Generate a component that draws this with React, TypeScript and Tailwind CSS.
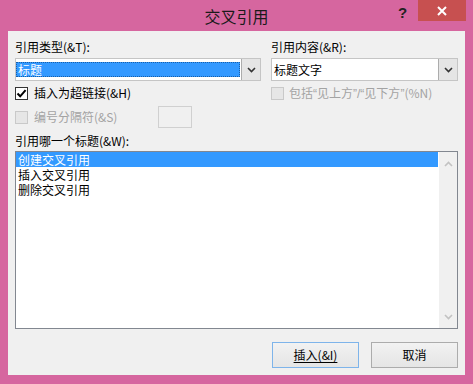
import React from "react";

function Chevron({ up = false, color = "#333", w = 9 }: { up?: boolean; color?: string; w?: number }) {
  return (
    <svg width={w} height={6} viewBox="0 0 9 6">
      {up ? (
        <path d="M1 5L4.5 1.5L8 5" fill="none" stroke={color} strokeWidth="1.6" />
      ) : (
        <path d="M1 1L4.5 4.5L8 1" fill="none" stroke={color} strokeWidth="1.6" />
      )}
    </svg>
  );
}

function CheckBox({ checked = false, disabled = false }: { checked?: boolean; disabled?: boolean }) {
  return (
    <div
      className={
        disabled
          ? "w-[13px] h-[13px] border border-[#c9c9c9] bg-[#e6e6e6] shrink-0"
          : "w-[13px] h-[13px] border border-[#333333] bg-white shrink-0 flex items-center justify-center"
      }
    >
      {checked && (
        <svg width="11" height="11" viewBox="0 0 11 11">
          <path d="M1.5 5.5L4.2 8.3L9.6 2.2" fill="none" stroke="#000" strokeWidth="2" />
        </svg>
      )}
    </div>
  );
}

function Q({ c }: { c: string }) {
  return <span className="font-['Liberation_Sans',sans-serif]">{c}</span>;
}

export default function App() {
  return (
    <div className="w-[473px] h-[384px] bg-[#d6669f] flex flex-col font-['Noto_Sans_CJK_SC','Liberation_Sans',sans-serif] text-[12px] text-black select-none">
      <div className="relative h-[31px] flex items-center justify-center shrink-0">
        <span className="text-[16px] leading-[20px] text-[#1a1a1a]">交叉引用</span>
        <span className="absolute left-[398px] top-[4px] text-[15px] font-bold leading-[18px] text-[#222] font-['Liberation_Sans',sans-serif]">?</span>
        <div className="absolute right-[7px] top-0 w-[48px] h-[21px] bg-[#c75050] flex items-center justify-center">
          <svg width="10" height="10" viewBox="0 0 10 10">
            <path d="M1 1L9 9M9 1L1 9" stroke="white" strokeWidth="2" />
          </svg>
        </div>
      </div>

      <div className="mx-[8px] mb-[9px] flex-1 bg-[#f0f0f0] px-[7px] pt-[8px] flex flex-col">
        {/* labels */}
        <div className="flex gap-[10px] h-[16px] items-center leading-[16px]">
          <div className="w-[246px]">引用类型(&amp;T):</div>
          <div className="w-[187px]">引用内容(&amp;R):</div>
        </div>

        {/* combos */}
        <div className="mt-[3px] flex gap-[10px] h-[23px]">
          <div className="w-[246px] h-[23px] border border-[#c5c5c5] bg-white flex">
            <div className="flex-1 pt-[3px] pr-[1px]">
              <div className="h-[15px] bg-[#3399ff] text-white leading-[15px] pl-[2px] outline outline-1 outline-dotted outline-[#1a5fa8] -outline-offset-1">
                标题
              </div>
            </div>
            <div className="w-[19px] h-[21px] border-l border-[#acacac] bg-[#e5e5e5] flex items-center justify-center">
              <Chevron color="#333" />
            </div>
          </div>
          <div className="w-[187px] h-[23px] border border-[#c5c5c5] bg-white flex">
            <div className="flex-1 pt-[3px] pl-[2px] leading-[15px]">标题文字</div>
            <div className="w-[19px] h-[21px] border-l border-[#acacac] bg-[#e5e5e5] flex items-center justify-center">
              <Chevron color="#333" />
            </div>
          </div>
        </div>

        {/* checkbox row 1 */}
        <div className="mt-[4px] flex gap-[10px] h-[16px] items-center">
          <div className="w-[246px] flex items-center gap-[6px]">
            <CheckBox checked />
            <span className="leading-[16px]">插入为超链接(&amp;H)</span>
          </div>
          <div className="w-[187px] flex items-center gap-[5px] whitespace-nowrap">
            <CheckBox disabled />
            <span className="leading-[16px] text-[#a3a3a3]">
              包括<Q c="“" />见上方<Q c="”/“" />见下方<Q c="”" />(%N)
            </span>
          </div>
        </div>

        {/* checkbox row 2 */}
        <div className="mt-[5px] flex h-[22px] items-center">
          <div className="w-[143px] flex items-center gap-[6px]">
            <CheckBox disabled />
            <span className="leading-[16px] text-[#a3a3a3]">编号分隔符(&amp;S)</span>
          </div>
          <div className="w-[34px] h-[22px] border border-[#d0d0d0] bg-[#f0f0f0]" />
        </div>

        {/* list label */}
        <div className="mt-[5px] h-[16px] leading-[16px]">引用哪一个标题(&amp;W):</div>

        {/* listbox */}
        <div className="mt-[2px] h-[178px] border border-[#828790] bg-white flex">
          <div className="flex-1 pr-[1px]">
            <div className="h-[15px] leading-[15px] bg-[#3399ff] text-white pl-[2px]">创建交叉引用</div>
            <div className="h-[15px] leading-[15px] pl-[2px]">插入交叉引用</div>
            <div className="h-[15px] leading-[15px] pl-[2px]">删除交叉引用</div>
          </div>
          <div className="w-[18px] bg-[#f0f0f0] flex flex-col items-center justify-between pt-[9px] pb-[8px]">
            <Chevron up color="#c2c2c2" w={9} />
            <Chevron color="#c2c2c2" w={9} />
          </div>
        </div>

        {/* buttons */}
        <div className="mt-[13px] flex justify-end gap-[12px] h-[26px]">
          <div className="w-[87px] h-[26px] border border-[#7eb4ea] bg-gradient-to-b from-[#f2f2f2] to-[#e5e5e5] flex items-center justify-center">
            <span className="underline underline-offset-2 leading-[16px]">插入(&amp;I)</span>
          </div>
          <div className="w-[87px] h-[26px] border border-[#acacac] bg-gradient-to-b from-[#f2f2f2] to-[#e5e5e5] flex items-center justify-center">
            <span className="leading-[16px]">取消</span>
          </div>
        </div>
      </div>
    </div>
  );
}
